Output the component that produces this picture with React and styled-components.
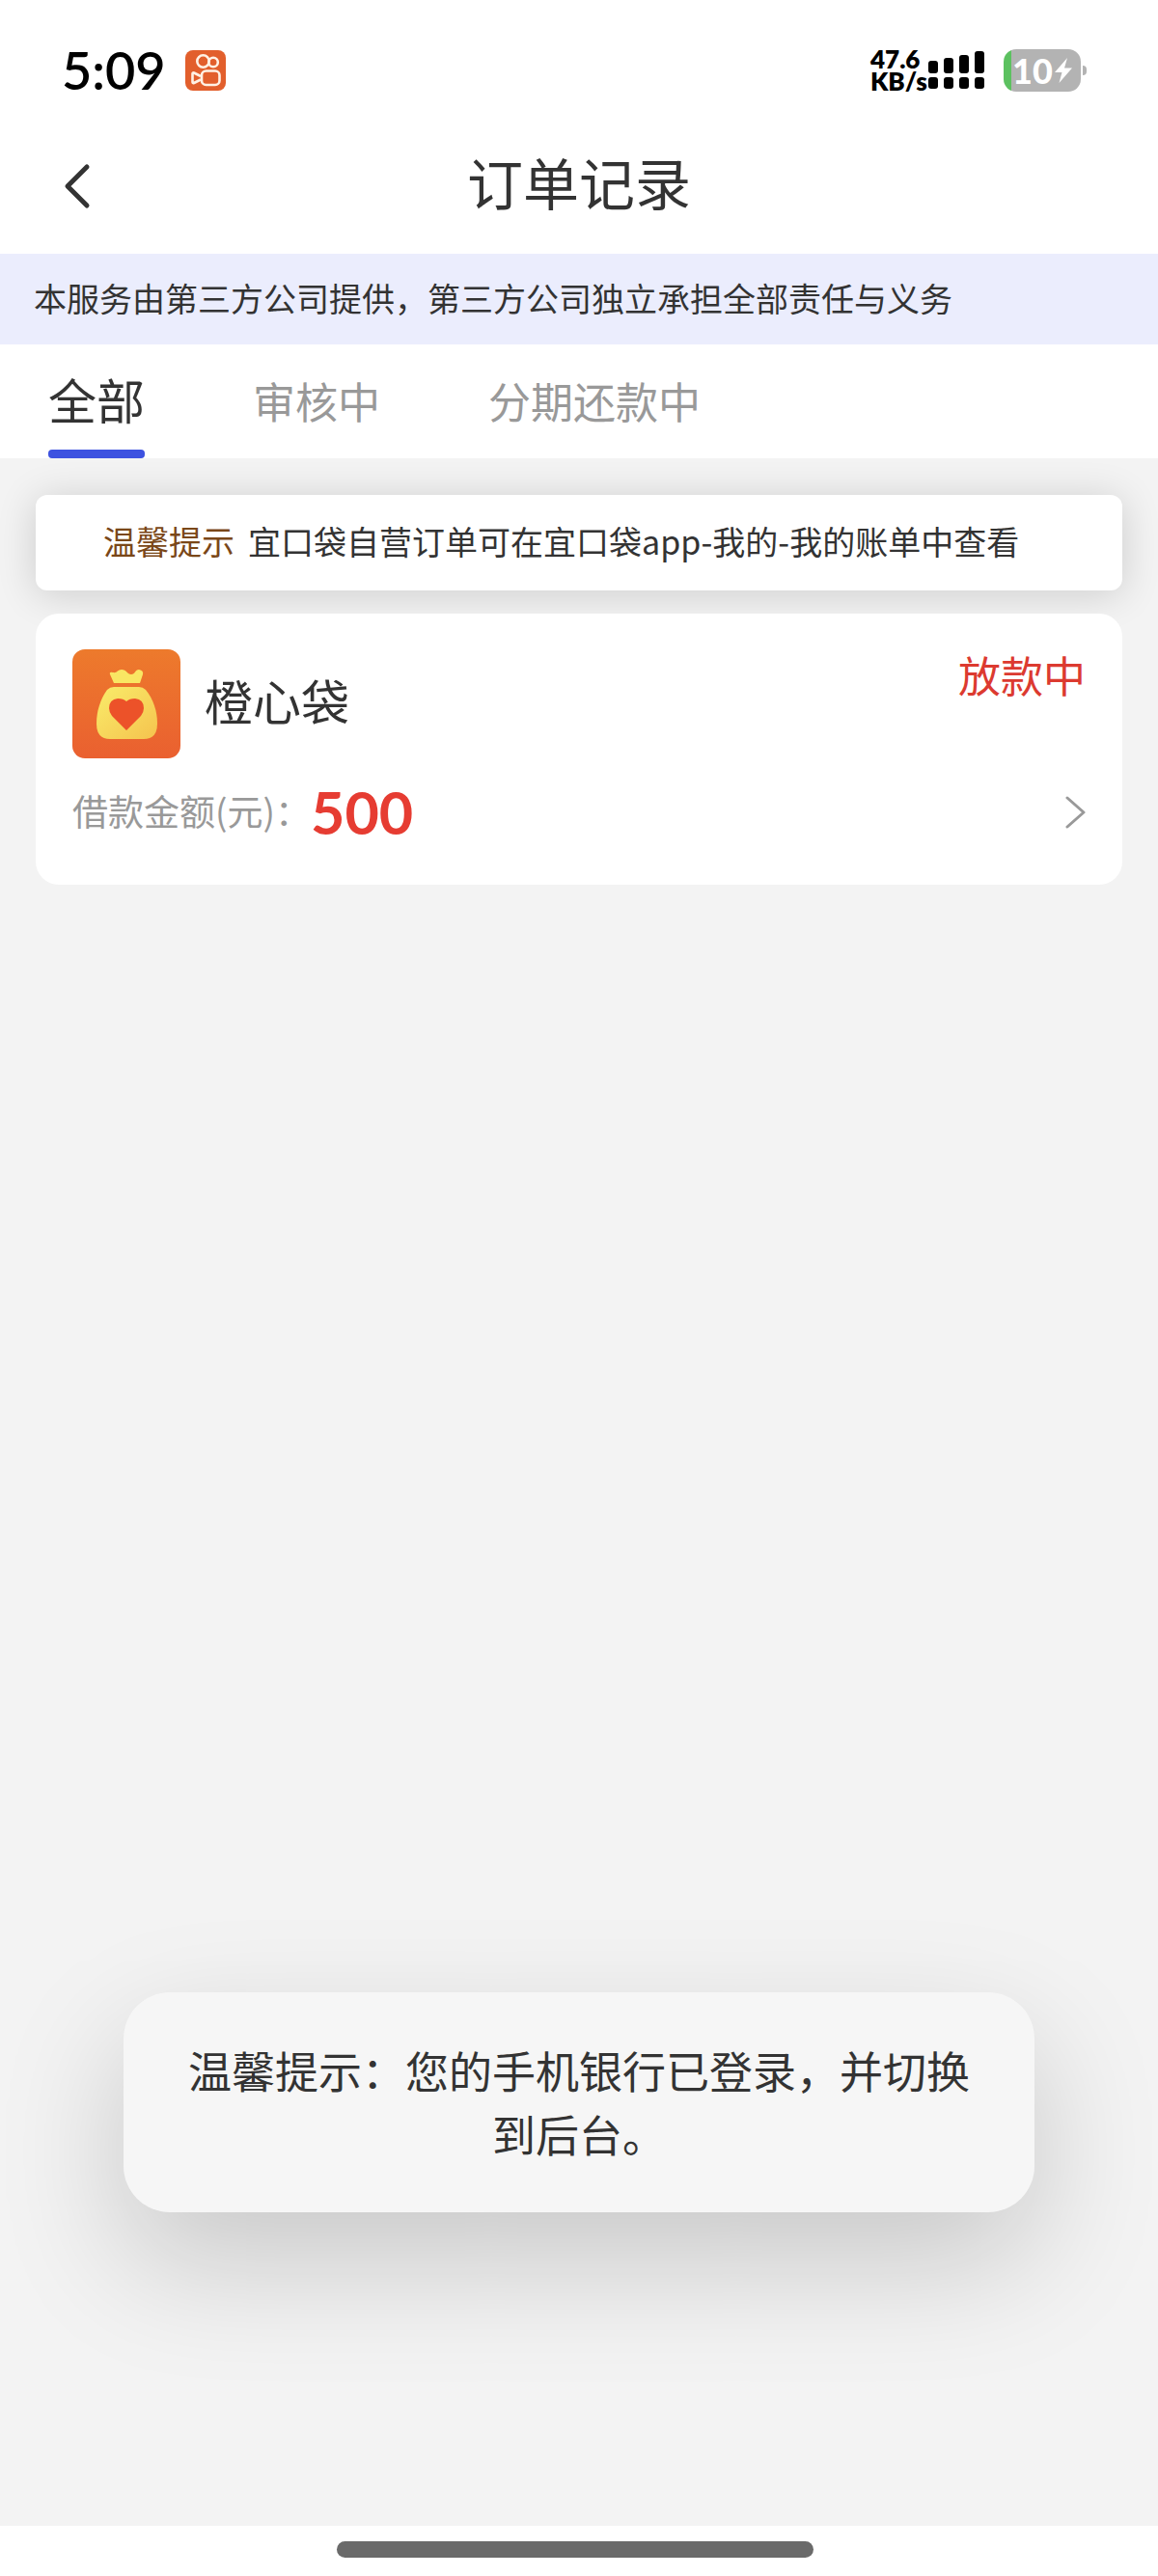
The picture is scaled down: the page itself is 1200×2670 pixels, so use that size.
import React, { useState } from "react";
import styled, { createGlobalStyle } from "styled-components";

const GlobalStyle = createGlobalStyle`
  * {
    box-sizing: border-box;
  }

  body {
    margin: 0;
    background: #f3f3f3;
    color: #333;
    font-family: "Noto Sans CJK SC", "Noto Sans", sans-serif;
  }

  button {
    padding: 0;
    border: 0;
    background: none;
    color: inherit;
    font: inherit;
    cursor: pointer;
  }

  svg {
    display: block;
    flex: none;
  }
`;

const Page = styled.div`
  position: relative;
  display: flex;
  flex-direction: column;
  min-height: 100vh;
`;

const StatusBar = styled.div`
  display: flex;
  align-items: center;
  justify-content: space-between;
  height: 122px;
  padding: 24px 74px 0 64px;
  background: white;
  color: black;
  font-family: Lato, sans-serif;
`;

const StatusGroup = styled.div`
  display: flex;
  align-items: center;
  gap: ${({ $gap }) => $gap}px;
`;

const Clock = styled.time`
  font-size: 54px;
  font-weight: 600;
  line-height: 54px;
`;

const NetSpeed = styled.div`
  display: flex;
  flex-direction: column;
  width: 60px;
  font-size: 26px;
  font-weight: 800;
  line-height: 23px;
  white-space: nowrap;
`;

const Battery = styled.div`
  display: flex;
  align-items: center;
  gap: 2px;
  margin-left: 20px;
`;

const BatteryBody = styled.div`
  display: flex;
  align-items: center;
  justify-content: center;
  gap: 2px;
  width: 80px;
  height: 44px;
  border-radius: 13px;
  background: linear-gradient(to right, #5cc160 10%, #b3b3b3 10%);
  color: white;
  font-size: 36px;
  font-weight: 900;
  line-height: 44px;
`;

const BatteryTip = styled.span`
  width: 4px;
  height: 10px;
  border-radius: 0 5px 5px 0;
  background: #b3b3b3;
`;

const Header = styled.header`
  display: grid;
  grid-template-columns: 60px 1fr 60px;
  align-items: center;
  height: 141px;
  padding: 0 50px;
  background: white;
`;

const BackButton = styled.button`
  display: grid;
  place-items: center;
  width: 60px;
  height: 80px;
`;

const Title = styled.h1`
  margin: 0;
  padding-bottom: 10px;
  font-size: 58px;
  font-weight: 400;
  line-height: 80px;
  text-align: center;
`;

const Disclaimer = styled.p`
  margin: 0;
  padding: 22px 35px 24px;
  background: #ebedfd;
  font-size: 34px;
  line-height: 48px;
`;

const Tabs = styled.nav`
  display: flex;
  gap: 112px;
  height: 118px;
  padding: 0 50px;
  background: white;
`;

const Tab = styled.button`
  color: #999;
  font-size: 44px;
  line-height: 60px;

  &[aria-selected="true"] {
    color: #333;
    font-size: 50px;
    line-height: 56px;
  }
`;

const TabLabel = styled.span`
  display: flex;
  flex-direction: column;
  justify-content: space-between;
  height: 118px;
  padding-top: 28px;

  &::after {
    content: "";
    height: 9px;
    border-radius: 4px;
    background: ${({ $active }) => ($active ? "#3d52e0" : "transparent")};
  }
`;

const Content = styled.main`
  display: flex;
  flex: 1;
  flex-direction: column;
  gap: 24px;
  padding: 38px 37px;
`;

const Notice = styled.div`
  display: flex;
  gap: 14px;
  padding: 24px 70px 27px;
  border-radius: 12px;
  background: white;
  box-shadow: 0 4px 40px rgba(0, 0, 0, 0.16);
  font-size: 34px;
  line-height: 48px;
`;

const NoticeTag = styled.span`
  color: #7a4718;
`;

const OrderCard = styled.article`
  position: relative;
  padding: 37px 38px 28px;
  border-radius: 24px;
  background: white;
`;

const OrderTop = styled.div`
  display: flex;
  align-items: center;
  gap: 25px;
`;

const OrderName = styled.h2`
  flex: 1;
  margin: 0;
  padding-bottom: 10px;
  font-size: 50px;
  font-weight: 400;
  line-height: 72px;
`;

const OrderStatus = styled.span`
  align-self: flex-start;
  color: #dc3a30;
  font-size: 44px;
  line-height: 52px;
`;

const OrderBottom = styled.div`
  display: flex;
  align-items: center;
  height: 95px;
  margin-top: 8px;
`;

const AmountLabel = styled.span`
  padding-bottom: 4px;
  color: #999;
  font-size: 37px;
  line-height: 56px;
`;

const Amount = styled.strong`
  flex: 1;
  color: #e63c32;
  font-family: Lato, sans-serif;
  font-size: 61px;
  font-weight: 700;
  line-height: 72px;
`;

const Toast = styled.div`
  position: absolute;
  right: 128px;
  bottom: 377px;
  left: 128px;
  padding: 48px 60px;
  border-radius: 48px;
  background: #f6f6f6;
  box-shadow: 0 50px 130px rgba(0, 0, 0, 0.18);
  font-size: 45px;
  line-height: 66px;
  text-align: center;
`;

const HomeBar = styled.div`
  display: flex;
  justify-content: center;
  height: 52px;
  padding: 16px 8px 0 0;
  background: white;
`;

const HomeHandle = styled.span`
  width: 494px;
  height: 17px;
  border-radius: 9px;
  background: #6a6a6a;
`;

function VideoAppIcon() {
  return (
    <svg width="42" height="42" viewBox="0 0 42 42" fill="none" stroke="#fff1e4" strokeWidth="2.6">
      <rect width="42" height="42" rx="8" fill="#e25f2c" stroke="none" />
      <circle cx="18.500" cy="11.5" r="6.2" />
      <circle cx="29" cy="12.5" r="4.8" />
      <rect x="17" y="21.5" width="18.5" height="14.5" rx="4.5" />
      <path d="M16 27 L9 23.5 Q7.5 23 7.5 24.5 V33 Q7.5 34.5 9 34 L16 30.5" strokeLinejoin="round" />
    </svg>
  );
}

function SignalIcon() {
  const tops = [10, 7, 4, 0];
  return (
    <svg width="58" height="40" viewBox="0 0 58 40">
      {tops.map((top, i) => (
        <g key={top}>
          <rect x={i * 16} y={top} width="10" height={23 - top} rx="3" />
          <rect x={i * 16} y="27" width="10" height="12" rx="3" />
        </g>
      ))}
    </svg>
  );
}

function BoltIcon() {
  return (
    <svg width="18" height="26" viewBox="0 0 18 26" fill="white">
      <path d="M13 0 L0 15 H7.5 L4.5 26 L18 10.5 H10 Z" />
    </svg>
  );
}

function MoneyBagIcon() {
  return (
    <svg width="112" height="113" viewBox="0 0 112 113">
      <defs>
        <linearGradient id="bagTile" x1="0" y1="0" x2="0" y2="1">
          <stop offset="0" stopColor="#ed7a2c" />
          <stop offset="1" stopColor="#ea6030" />
        </linearGradient>
        <linearGradient id="bagFill" x1="0" y1="0" x2="1" y2="1">
          <stop offset="0" stopColor="#f9ec6a" />
          <stop offset="1" stopColor="#f5c34e" />
        </linearGradient>
      </defs>
      <rect width="112" height="113" rx="13" fill="url(#bagTile)" />
      <path
        d="M43 35 L39 26 Q38 23 42 24 C46 25 47 21 51 21 C56 21 57 26 61 26 C65 26 65 21 69 21 Q74 22 73 26 L70 35 Z"
        fill="#f9e763"
      />
      <path
        d="M43 39 H69 Q73 39 76 42 C84 52 88 64 88 77 Q88 93 74 93 H39 Q25 93 25 77 C25 64 29 52 36 42 Q39 39 43 39 Z"
        fill="url(#bagFill)"
      />
      <path
        d="M56 84 L41 69 Q38 65 38 61 Q38 52 47 51 Q53 51 56 54 Q59 51 65 51 Q74 52 74 61 Q74 65 71 69 Z"
        fill="#ec5229"
      />
    </svg>
  );
}

const TABS = ["全部", "审核中", "分期还款中"];

export default function App() {
  const [active, setActive] = useState(TABS[0]);

  return (
    <>
      <GlobalStyle />
      <Page>
        <StatusBar>
          <StatusGroup $gap={20}>
            <Clock>5:09</Clock>
            <VideoAppIcon />
          </StatusGroup>
          <StatusGroup $gap={0}>
            <NetSpeed>
              <span>47.6</span>
              <span>KB/s</span>
            </NetSpeed>
            <SignalIcon />
            <Battery>
              <BatteryBody>
                10
                <BoltIcon />
              </BatteryBody>
              <BatteryTip />
            </Battery>
          </StatusGroup>
        </StatusBar>

        <Header>
          <BackButton aria-label="返回">
            <svg width="28" height="48" viewBox="0 0 28 48" fill="none" stroke="#333" strokeWidth="5">
              <path d="M24 4 L4 24 L24 44" strokeLinecap="round" strokeLinejoin="round" />
            </svg>
          </BackButton>
          <Title>订单记录</Title>
        </Header>

        <Disclaimer>本服务由第三方公司提供，第三方公司独立承担全部责任与义务</Disclaimer>

        <Tabs role="tablist">
          {TABS.map((name) => (
            <Tab
              key={name}
              role="tab"
              aria-selected={name === active}
              onClick={() => setActive(name)}
            >
              <TabLabel $active={name === active}>{name}</TabLabel>
            </Tab>
          ))}
        </Tabs>

        <Content>
          <Notice>
            <NoticeTag>温馨提示</NoticeTag>
            <span>宜口袋自营订单可在宜口袋app-我的-我的账单中查看</span>
          </Notice>

          <OrderCard>
            <OrderTop>
              <MoneyBagIcon />
              <OrderName>橙心袋</OrderName>
              <OrderStatus>放款中</OrderStatus>
            </OrderTop>
            <OrderBottom>
              <AmountLabel>借款金额(元)：</AmountLabel>
              <Amount>500</Amount>
              <svg width="21" height="34" viewBox="0 0 21 34" fill="none" stroke="#999" strokeWidth="3">
                <path d="M2 2 L19 17 L2 32" strokeLinecap="round" strokeLinejoin="round" />
              </svg>
            </OrderBottom>
          </OrderCard>
        </Content>

        <HomeBar>
          <HomeHandle />
        </HomeBar>

        <Toast role="status">温馨提示：您的手机银行已登录，并切换到后台。</Toast>
      </Page>
    </>
  );
}
